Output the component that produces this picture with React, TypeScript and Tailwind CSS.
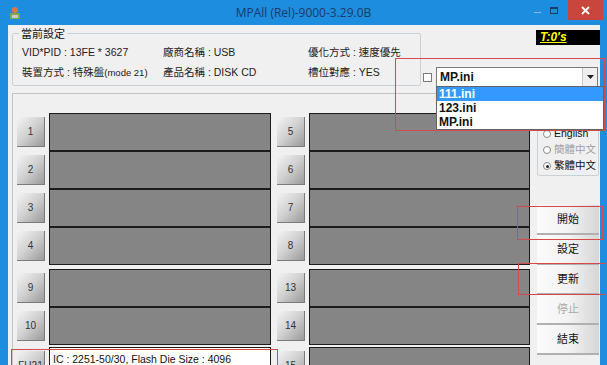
import React from "react";

const cjk = { fontFamily: '"Liberation Sans", "Noto Sans CJK TC", sans-serif' };

function Port({ label }: { label: string }) {
  return (
    <div className="w-[28px] h-[30px] shrink-0 flex items-center justify-center bg-gradient-to-br from-[#f4f4f4] via-[#d0d0d0] to-[#9a9a9a] border-r border-b border-[#7a7a7a] text-[10px] text-[#333]">
      {label}
    </div>
  );
}

function Slot({ label, white, text }: { label: string; white?: boolean; text?: string }) {
  return (
    <div className="flex items-center h-[38px]">
      <Port label={label} />
      <div
        className={`ml-[4px] h-[38px] flex-1 border border-[#1c1c1c] ${
          white ? "bg-white" : "bg-[#858585]"
        } flex items-start pt-[4px] pl-[3px] text-[10.5px] text-[#111] whitespace-nowrap`}
      >
        {text}
      </div>
    </div>
  );
}

function SideButton({ label, disabled }: { label: string; disabled?: boolean }) {
  return (
    <div
      className={`h-[30px] flex items-center justify-center bg-gradient-to-r from-[#fbfbfb] via-[#f3f3f3] to-[#d6d6d6] border-b-2 border-[#b0b0b0] text-[11px] ${
        disabled ? "text-[#a8a8a8]" : "text-[#111]"
      }`}
    >
      {label}
    </div>
  );
}

function Radio({ label, checked, disabled }: { label: string; checked?: boolean; disabled?: boolean }) {
  return (
    <div
      className={`flex items-center gap-[3px] h-[16px] whitespace-nowrap text-[10.5px] ${
        disabled ? "text-[#a0a0a0]" : "text-[#111]"
      }`}
    >
      <span className="w-[8px] h-[8px] shrink-0 rounded-full border border-[#8a8a8a] bg-white flex items-center justify-center">
        {checked && <span className="w-[3px] h-[3px] rounded-full bg-[#222]" />}
      </span>
      {label}
    </div>
  );
}

export default function App() {
  return (
    <div className="w-[607px] h-[365px] overflow-hidden bg-[#1d8de0] flex flex-col relative" style={cjk}>
      {/* title bar */}
      <div className="h-[25px] shrink-0 flex items-center relative">
        <svg className="ml-[9px]" width="12" height="14" viewBox="0 0 12 14">
          <circle cx="6" cy="4" r="3" fill="#e8743c" />
          <rect x="1" y="7" width="10" height="6" rx="1" fill="#7aa85a" />
          <rect x="3" y="9" width="6" height="3" fill="#c9c9c9" />
        </svg>
        <div
          className="absolute left-0 right-0 text-center text-[12px] text-[#1d3a66]"
          style={{ fontFamily: '"Open Sans", "Liberation Sans", sans-serif' }}
        >
          MPAll (Rel)-9000-3.29.0B
        </div>
        <div className="ml-auto flex items-start self-start h-[20px] mr-[4px]">
          <div className="w-[14px] h-[20px] flex items-center justify-center">
            <span className="w-[7px] h-[1px] bg-[#8fb8e0] mt-[4px]" />
          </div>
          <div className="w-[16px] h-[20px] flex items-center justify-center ml-[2px] mr-[6px]">
            <span className="w-[8px] h-[7px] border border-[#1d3a66] border-t-2" />
          </div>
          <div className="w-[35px] h-[20px] bg-[#c9463d] flex items-center justify-center">
            <svg width="9" height="9" viewBox="0 0 9 9">
              <path d="M1 1 L8 8 M8 1 L1 8" stroke="#fff" strokeWidth="1.8" />
            </svg>
          </div>
        </div>
      </div>

      {/* body */}
      <div className="flex-1 ml-[8px] mr-[7px] bg-[#f0f0f0] flex flex-col relative">
        {/* top */}
        <div className="h-[68px] shrink-0 flex">
          <div className="relative ml-[4px] mt-[8px] w-[409px] h-[53px] border border-[#c9d0d6] rounded-[2px]">
            <span className="absolute -top-[7px] left-[6px] bg-[#f0f0f0] px-[2px] text-[11px] leading-[14px] text-[#111]">
              當前設定
            </span>
            <div className="grid grid-cols-[141px_145px_1fr] pl-[9px] pt-[12px] gap-y-[7px] text-[10.5px] leading-[13px] text-[#222] whitespace-nowrap">
              <span>VID*PID : 13FE * 3627</span>
              <span>廠商名稱 : USB</span>
              <span>優化方式 : 速度優先</span>
              <span>
                裝置方式 : 特殊盤<span className="text-[9.5px]">(mode 21)</span>
              </span>
              <span>產品名稱 : DISK CD</span>
              <span>槽位對應 : YES</span>
            </div>
          </div>
          <div className="flex-1 flex flex-col items-end">
            <div className="mt-[5px] w-[64px] h-[15px] bg-black pl-[4px] text-[12px] leading-[15px] font-bold italic underline text-[#ffff00]">
              T:0's
            </div>
            <div className="mt-[22px] mr-[2px] flex items-center">
              <span className="w-[9px] h-[9px] border border-[#7a7a7a] bg-white mr-[4px]" />
              <div className="w-[162px] h-[20px] bg-white border border-[#7a7a7a] flex items-center">
                <span className="pl-[3px] text-[12px] font-bold text-[#111]">MP.ini</span>
                <span className="ml-auto w-[15px] h-[18px] border-l border-[#c8c8c8] bg-[#f0f0f0] flex items-center justify-center">
                  <svg width="7" height="4" viewBox="0 0 7 4">
                    <path d="M0 0 H7 L3.5 4 Z" fill="#222" />
                  </svg>
                </span>
              </div>
            </div>
          </div>
        </div>

        {/* main */}
        <div className="flex flex-1">
          <div className="ml-[4px] w-[521px] border-l border-t border-[#c4c4c4] pl-[4px] pt-[19px] flex gap-[6px]">
            <div className="w-[254px] flex flex-col">
              <Slot label="1" />
              <Slot label="2" />
              <Slot label="3" />
              <Slot label="4" />
              <div className="h-[4px]" />
              <Slot label="9" />
              <Slot label="10" />
              <div className="h-[2px]" />
              <Slot label="FU21" white text="IC : 2251-50/30, Flash Die Size : 4096" />
            </div>
            <div className="w-[253px] flex flex-col">
              <Slot label="5" />
              <Slot label="6" />
              <Slot label="7" />
              <Slot label="8" />
              <div className="h-[4px]" />
              <Slot label="13" />
              <Slot label="14" />
              <div className="h-[2px]" />
              <Slot label="15" />
            </div>
          </div>
          <div className="ml-[4px] w-[62px] flex flex-col">
            <div className="mt-[22px] h-[61px] border border-[#c9d0d6] rounded-[2px] pl-[5px] pt-[10px] flex flex-col">
              <Radio label="English" />
              <Radio label="簡體中文" disabled />
              <Radio label="繁體中文" checked />
            </div>
            <div className="mt-[29px] flex flex-col">
              <SideButton label="開始" />
              <SideButton label="設定" />
              <SideButton label="更新" />
              <SideButton label="停止" disabled />
              <SideButton label="結束" />
            </div>
          </div>
        </div>
      </div>

      {/* dropdown list */}
      <div
        className="absolute left-[436px] top-[86px] w-[168px] bg-white border border-[#646464] text-[12px] font-bold leading-[14px] text-[#111]"
        style={{ fontFamily: '"Liberation Sans", sans-serif' }}
      >
        <div className="bg-[#3399ff] text-white pl-[2px]">111.ini</div>
        <div className="pl-[2px]">123.ini</div>
        <div className="pl-[2px]">MP.ini</div>
      </div>

      {/* red highlights */}
      <div className="absolute left-[395px] top-[58px] w-[210px] h-[73px] border border-[#d44a4a]" />
      <div className="absolute left-[517px] top-[206px] w-[86px] h-[34px] border border-[#d44a4a]" />
      <div className="absolute left-[518px] top-[263px] w-[88px] h-[32px] border border-[#d44a4a]" />
      <div className="absolute left-[11px] top-[349px] w-[267px] h-[30px] border border-[#d44a4a]" />
    </div>
  );
}
